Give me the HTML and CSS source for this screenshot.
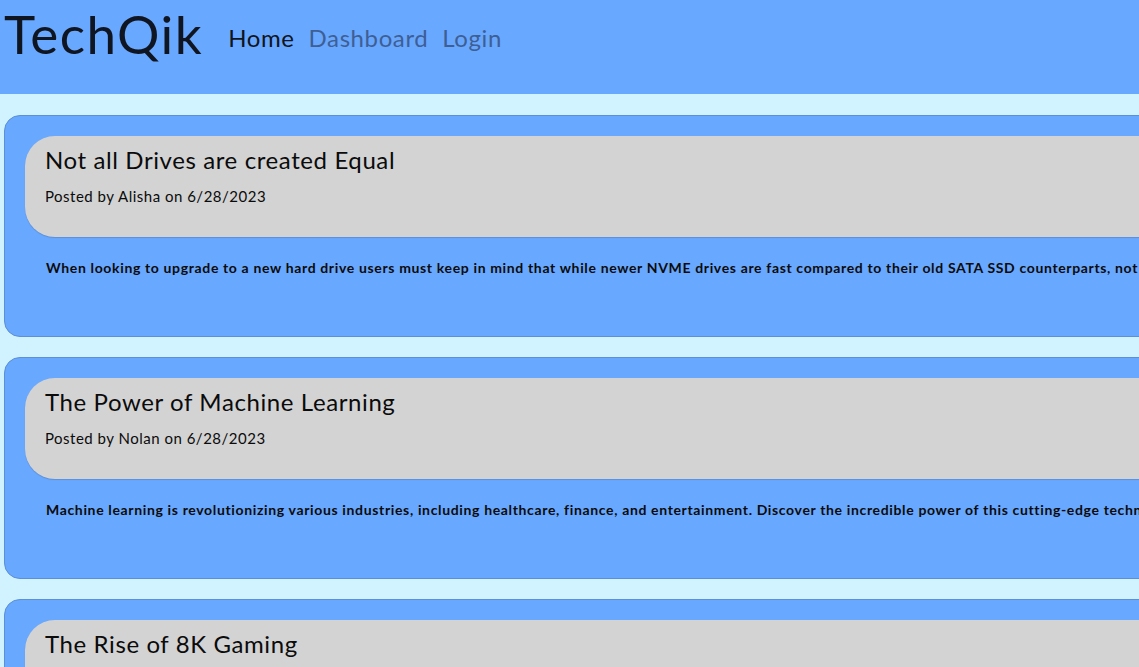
FILE: index.html
```html
<!DOCTYPE html>
<html lang="en">
<head>
<meta charset="utf-8">
<title>TechQik</title>
<link rel="stylesheet" href="styles.css">
</head>
<body>
<header class="site-header">
  <h1 class="brand">TechQik</h1>
  <nav class="nav">
    <a class="nav-link active" href="#">Home</a>
    <a class="nav-link" href="#">Dashboard</a>
    <a class="nav-link" href="#">Login</a>
  </nav>
</header>
<main class="posts">
  <article class="post">
    <div class="post-head">
      <h2 class="post-title">Not all Drives are created Equal</h2>
      <p class="post-meta">Posted by Alisha on 6/28/2023</p>
    </div>
    <p class="post-body">When looking to upgrade to a new hard drive users must keep in mind that while newer NVME drives are fast compared to their old SATA SSD counterparts, not all NVME drives are created equal and performance can vary widely between brands.</p>
  </article>
  <article class="post">
    <div class="post-head">
      <h2 class="post-title">The Power of Machine Learning</h2>
      <p class="post-meta">Posted by Nolan on 6/28/2023</p>
    </div>
    <p class="post-body">Machine learning is revolutionizing various industries, including healthcare, finance, and entertainment. Discover the incredible power of this cutting-edge technology and how it is shaping our future.</p>
  </article>
  <article class="post">
    <div class="post-head">
      <h2 class="post-title">The Rise of 8K Gaming</h2>
      <p class="post-meta">Posted by Alisha on 6/28/2023</p>
    </div>
    <p class="post-body">8K gaming is on the horizon, and with new graphics cards pushing the limits of performance, gamers are wondering whether the jump in resolution is worth it.</p>
  </article>
</main>
</body>
</html>
```
FILE: styles.css
```css
html, body {
  overflow-x: hidden;
}
body {
  margin: 0;
  background: #d1f3ff;
  font-family: "Lato", "Noto Sans", sans-serif;
  color: #0b0b0b;
}
.site-header {
  background: #69a8ff;
  height: 94px;
  display: flex;
  align-items: flex-start;
  gap: 25px;
  padding: 0 4px;
  box-sizing: border-box;
}
.brand {
  margin: 2px 0 0;
  font-size: 53px;
  font-weight: 400;
  letter-spacing: 1.5px;
  color: #0f1521;
}
.nav {
  display: flex;
  gap: 14px;
  margin-top: 23px;
}
.nav-link {
  font-size: 24px;
  letter-spacing: 0.6px;
  text-decoration: none;
  color: #3e5f95;
}
.nav-link.active {
  color: #0f1521;
}
.posts {
  display: flex;
  flex-direction: column;
  align-items: flex-start;
  gap: 20px;
  padding: 21px 4px;
}
.post {
  background: #69a8ff;
  border: 1px solid #5b8fd6;
  border-radius: 16px;
  padding: 20px 0 20px 20px;
  width: max-content;
  min-width: 1300px;
}
.post-head {
  background: #d3d3d3;
  border-radius: 30px 0 0 30px;
  height: 101px;
  box-sizing: border-box;
  padding: 9px 20px;
  box-shadow: 0 1px 1px rgba(0,0,0,0.15);
}
.post-title {
  margin: 0;
  font-size: 24px;
  font-weight: 400;
  letter-spacing: 0.6px;
}
.post-meta {
  margin: 13px 0 0;
  font-size: 15px;
  letter-spacing: 0.5px;
}
.post-body {
  margin: 22px 0 40px 21px;
  font-size: 14px;
  font-weight: 700;
  letter-spacing: 0.65px;
  white-space: nowrap;
}
```
